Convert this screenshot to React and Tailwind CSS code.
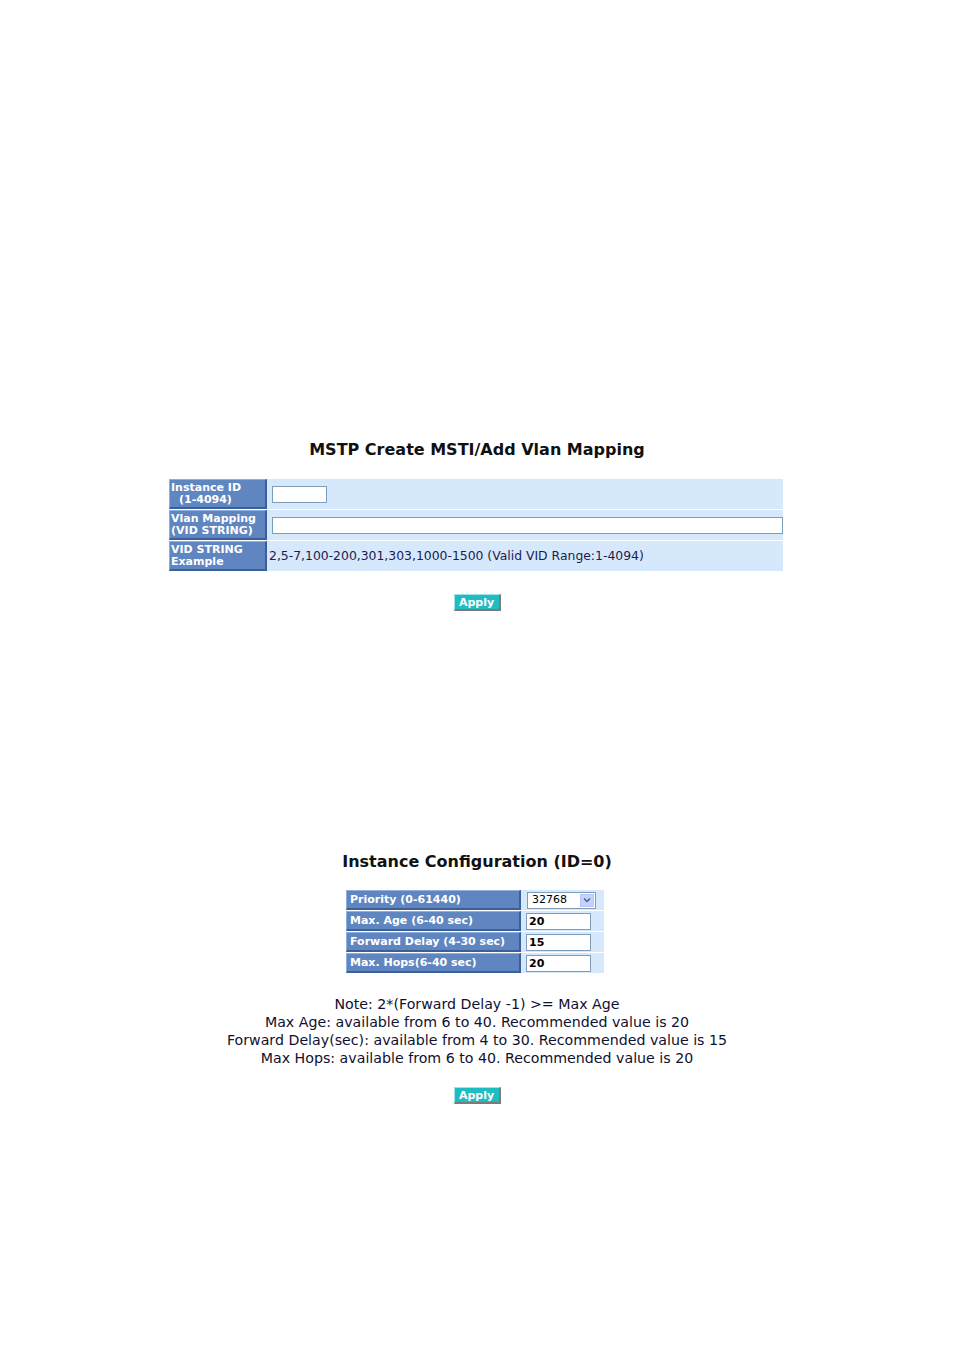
import React from "react";

const labelCls =
  "bg-[#5f86c0] text-white font-bold text-[11px] leading-[12px] px-[1px] border-t border-l border-[#8fb0dc] border-b-2 border-r-2 border-b-[#3a5f99] border-r-[#3a5f99] flex flex-col justify-center";

function ApplyButton() {
  return (
    <div className="flex justify-center">
      <button className="w-[47px] h-[17px] bg-[#1fbcc2] text-white font-bold text-[11px] leading-[13px] border-t border-l border-[#9ee3e6] border-b-2 border-r-2 border-b-[#7b7b7b] border-r-[#7b7b7b]">
        Apply
      </button>
    </div>
  );
}

function MstiTable() {
  return (
    <div className="w-[614px] ml-[169px] flex flex-col gap-[1px] mt-[19px]">
      <div className="flex h-[30px] bg-[#d6e8fb]">
        <div className={labelCls + " w-[98px]"}>
          <span>Instance ID</span>
          <span className="pl-[8px]">(1-4094)</span>
        </div>
        <div className="flex items-center pl-[5px]">
          <input className="w-[55px] h-[17px] bg-white border border-[#7f9db9]" />
        </div>
      </div>
      <div className="flex h-[30px] bg-[#d6e8fb]">
        <div className={labelCls + " w-[98px]"}>
          <span>Vlan Mapping</span>
          <span>(VID STRING)</span>
        </div>
        <div className="flex items-center pl-[5px] flex-1">
          <input className="w-full h-[17px] bg-white border border-[#7f9db9]" />
        </div>
      </div>
      <div className="flex h-[30px] bg-[#d6e8fb]">
        <div className={labelCls + " w-[98px]"}>
          <span>VID STRING</span>
          <span>Example</span>
        </div>
        <div className="flex items-center pl-[2px] text-[12.4px] text-[#1c1c52]">
          2,5-7,100-200,301,303,1000-1500 (Valid VID Range:1-4094)
        </div>
      </div>
    </div>
  );
}

function ConfigRow({ label, children }) {
  return (
    <div className="flex h-[20px] bg-[#d6e8fb]">
      <div className={labelCls + " w-[175px] text-[#eef3fb] text-[10.7px] pl-[3px]"}>{label}</div>
      <div className="flex items-center pl-[5px]">{children}</div>
    </div>
  );
}

function TextBox({ value }) {
  return (
    <div className="w-[65px] h-[17px] bg-white border border-[#7f9db9] text-[11px] font-bold leading-[15px] pl-[2px] text-black">
      {value}
    </div>
  );
}

function InstanceTable() {
  return (
    <div className="w-[258px] ml-[346px] flex flex-col gap-[1px] mt-[18px]">
      <ConfigRow label="Priority (0-61440)">
        <div className="w-[69px] h-[17px] bg-white border border-[#7f9db9] flex items-center justify-between ml-[1px]">
          <span className="text-[11px] pl-[4px] text-black">32768</span>
          <span className="w-[14px] h-[13px] mr-[1px] bg-[#c3d3fd] border border-[#b5c8f5] flex items-center justify-center">
            <svg width="8" height="6" viewBox="0 0 8 6">
              <path d="M1 1.5 L4 4.5 L7 1.5" stroke="#4d6185" strokeWidth="1.5" fill="none" />
            </svg>
          </span>
        </div>
      </ConfigRow>
      <ConfigRow label="Max. Age (6-40 sec)">
        <TextBox value="20" />
      </ConfigRow>
      <ConfigRow label="Forward Delay (4-30 sec)">
        <TextBox value="15" />
      </ConfigRow>
      <ConfigRow label="Max. Hops(6-40 sec)">
        <TextBox value="20" />
      </ConfigRow>
    </div>
  );
}

export default function App() {
  return (
    <div className="w-[954px] min-h-[1348px] bg-white text-black font-['DejaVu_Sans','Verdana',sans-serif] pt-[440px]">
      <h1 className="text-center font-bold text-[16px] leading-[20px] text-[#111]">
        MSTP Create MSTI/Add Vlan Mapping
      </h1>
      <MstiTable />
      <div className="mt-[23px]">
        <ApplyButton />
      </div>

      <h1 className="text-center font-bold text-[16px] leading-[20px] text-[#111] mt-[241px]">
        Instance Configuration (ID=0)
      </h1>
      <InstanceTable />

      <div className="mt-[22px] text-center text-[14.2px] leading-[18px] text-[#101030]">
        <p>Note: 2*(Forward Delay -1) &gt;= Max Age</p>
        <p>Max Age: available from 6 to 40. Recommended value is 20</p>
        <p>Forward Delay(sec): available from 4 to 30. Recommended value is 15</p>
        <p>Max Hops: available from 6 to 40. Recommended value is 20</p>
      </div>
      <div className="mt-[20px]">
        <ApplyButton />
      </div>
    </div>
  );
}
